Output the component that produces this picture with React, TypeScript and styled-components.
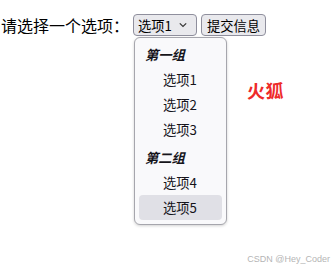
import * as React from 'react';
import styled, { createGlobalStyle } from 'styled-components';

const GlobalStyle = createGlobalStyle`
  html, body {
    margin: 0;
    padding: 0;
    background: #fff;
  }
  body {
    width: 335px;
    height: 271px;
    overflow: hidden;
    font-family: "Noto Sans CJK SC", "Noto Sans", sans-serif;
  }
`;

interface Group {
  label: string;
  options: string[];
}

const groups: Group[] = [
  { label: '第一组', options: ['选项1', '选项2', '选项3'] },
  { label: '第二组', options: ['选项4', '选项5'] },
];

const Page = styled.div`
  position: relative;
  width: 335px;
  height: 271px;
`;

const Form = styled.div`
  display: flex;
  align-items: center;
  gap: 4px;
  padding: 14px 0 0 1px;
`;

const Label = styled.span`
  font-size: 16px;
  line-height: 22px;
  color: #000;
`;

const Control = styled.div`
  position: relative;
`;

const SelectBox = styled.div`
  box-sizing: border-box;
  display: flex;
  align-items: center;
  justify-content: space-between;
  width: 64px;
  height: 22px;
  padding: 0 9px 0 4px;
  border: 1px solid #8f8f9d;
  border-radius: 4px;
  background: #e9e9ed;
  font-size: 13.3px;
  color: #000;
`;

const Button = styled.div`
  box-sizing: border-box;
  display: flex;
  align-items: center;
  justify-content: center;
  width: 65px;
  height: 22px;
  border: 1px solid #8f8f9d;
  border-radius: 4px;
  background: #e9e9ed;
  font-size: 13.3px;
  color: #000;
`;

const Menu = styled.div`
  position: absolute;
  top: 23px;
  left: 1px;
  box-sizing: border-box;
  width: 93px;
  padding: 3px 4px 4px;
  border: 1px solid #a6a6ad;
  border-radius: 6px;
  background: #f9f9fb;
  box-shadow: 0 1px 3px rgba(0, 0, 0, 0.18);
  z-index: 2;
`;

const OptGroup = styled.div`
  & + & {
    padding-top: 2px;
  }
`;

const GroupLabel = styled.div`
  height: 26px;
  display: flex;
  align-items: center;
  padding-left: 6px;
  font-size: 13.3px;
  font-weight: bold;
  font-style: italic;
  color: #15141a;
`;

const Option = styled.div<{ $active?: boolean }>`
  height: 25px;
  display: flex;
  align-items: center;
  padding-left: 24px;
  border-radius: 4px;
  font-size: 13.3px;
  color: #15141a;
  background: ${(p) => (p.$active ? '#e0e0e6' : 'transparent')};
`;

const Badge = styled.div`
  position: absolute;
  left: 247px;
  top: 77px;
  font-size: 18px;
  font-weight: bold;
  color: #ee2a2a;
  letter-spacing: 0.5px;
`;

const Watermark = styled.div`
  position: absolute;
  right: 5px;
  bottom: 7px;
  font-family: "Liberation Sans", Arial, sans-serif;
  font-size: 9px;
  color: #b5b5b5;
`;

const Chevron = () => (
  <svg width="8" height="6" viewBox="0 0 8 6">
    <path d="M0.8 1.4 L4 4.4 L7.2 1.4" fill="none" stroke="#333" strokeWidth="1.2" />
  </svg>
);

export default function App() {
  return (
    <Page>
      <GlobalStyle />
      <Form>
        <Label>请选择一个选项：</Label>
        <Control>
          <SelectBox>
            <span>选项1</span>
            <Chevron />
          </SelectBox>
          <Menu>
            {groups.map((g) => (
              <OptGroup key={g.label}>
                <GroupLabel>{g.label}</GroupLabel>
                {g.options.map((o) => (
                  <Option key={o} $active={o === '选项5'}>
                    {o}
                  </Option>
                ))}
              </OptGroup>
            ))}
          </Menu>
        </Control>
        <Button>提交信息</Button>
      </Form>
      <Badge>火狐</Badge>
      <Watermark>CSDN @Hey_Coder</Watermark>
    </Page>
  );
}
